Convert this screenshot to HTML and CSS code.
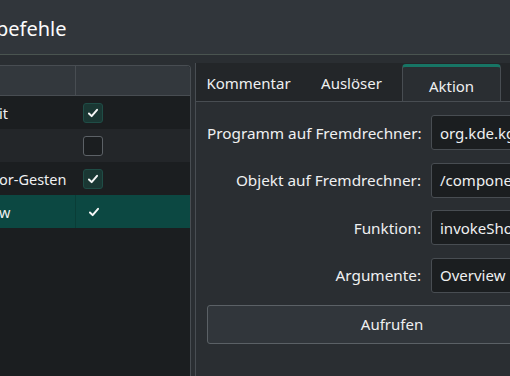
FILE: index.html
```html
<!DOCTYPE html>
<html lang="de">
<head>
    <meta charset="UTF-8">
    <meta name="viewport" content="width=device-width, initial-scale=1.0">
    <title>Befehle</title>
    <link rel="stylesheet" href="styles.css">
</head>
<body>
    <div class="titlebar">
        <h1 class="page-title">befehle</h1>
    </div>
    <div class="main">
        <div class="tree">
            <div class="tree-head">
                <div class="col-name"></div>
                <div class="col-check"></div>
            </div>
            <div class="tree-row">
                <div class="col-name">it</div>
                <div class="col-check"><span class="checkbox checked"><svg viewBox="0 0 20 20"><path d="M5.5 10.5l3 3 6-7"/></svg></span></div>
            </div>
            <div class="tree-row alt">
                <div class="col-name"></div>
                <div class="col-check"><span class="checkbox"></span></div>
            </div>
            <div class="tree-row">
                <div class="col-name">or-Gesten</div>
                <div class="col-check"><span class="checkbox checked"><svg viewBox="0 0 20 20"><path d="M5.5 10.5l3 3 6-7"/></svg></span></div>
            </div>
            <div class="tree-row selected">
                <div class="col-name">w</div>
                <div class="col-check"><span class="checkbox plain"><svg viewBox="0 0 20 20"><path d="M5.5 10.5l3 3 6-7"/></svg></span></div>
            </div>
        </div>

        <div class="tabs">
            <div class="tabbar">
                <div class="tab tab-1">Kommentar</div>
                <div class="tab tab-2">Auslöser</div>
                <div class="tab tab-3 active">Aktion</div>
            </div>
            <div class="panel">
                <div class="form">
                    <label>Programm auf Fremdrechner:</label>
                    <div class="field">org.kde.kglobalaccel</div>
                    <label>Objekt auf Fremdrechner:</label>
                    <div class="field">/component/kwin</div>
                    <label>Funktion:</label>
                    <div class="field">invokeShortcut</div>
                    <label>Argumente:</label>
                    <div class="field">Overview</div>
                </div>
                <button class="run-btn">Aufrufen</button>
            </div>
        </div>
    </div>
</body>
</html>
```

FILE: styles.css
```css
html, body {
    margin: 0;
    height: 100%;
    overflow: hidden;
}
body {
    background-color: #2a2e32;
    color: #eff0f1;
    font-family: "Noto Sans", sans-serif;
    font-size: 15px;
}
.titlebar {
    height: 55px;
    box-sizing: border-box;
    padding-top: 3px;
    background-color: #31363b;
    border-bottom: 1px solid #4a5450;
    display: flex;
    align-items: center;
}
.page-title {
    margin: 0 0 0 -4px;
    font-size: 20px;
    font-weight: normal;
    color: #fcfcfc;
}
.main {
    display: flex;
    padding-top: 10px;
    height: calc(100% - 65px);
}

/* linke Liste */
.tree {
    width: 190px;
    flex-shrink: 0;
    background-color: #1b1e20;
    border-top: 1px solid #484d52;
    border-right: 1px solid #484d52;
    border-top-right-radius: 4px;
    overflow: hidden;
}
.tree-head {
    display: flex;
    height: 29px;
    background-color: #33383d;
    border-bottom: 1px solid #484d52;
}
.tree-head .col-name {
    border-right: 1px solid #484d52;
}
.tree-row {
    display: flex;
    height: 33px;
    align-items: center;
}
.tree-row.alt {
    background-color: #232629;
}
.tree-row.selected {
    background-color: #0c4842;
}
.tree-row.selected .col-name {
    align-self: stretch;
    display: flex;
    align-items: center;
    border-right: 1px solid #0a3d37;
}
.col-name {
    width: 75px;
    flex-shrink: 0;
    white-space: nowrap;
    font-size: 14.5px;
    text-indent: -1px;
}
.col-check {
    flex: 1;
    padding-left: 8px;
    display: flex;
    align-items: center;
}
.checkbox {
    width: 18px;
    height: 18px;
    border: 1px solid #5c6166;
    border-radius: 3px;
    background-color: #1b1e20;
    display: inline-flex;
}
.checkbox.checked {
    background-color: #1a3733;
    border-color: #1f4d46;
}
.checkbox.plain {
    background: none;
    border-color: transparent;
}
.checkbox svg {
    width: 18px;
    height: 18px;
}
.checkbox path {
    fill: none;
    stroke: #f4f5f5;
    stroke-width: 2.2;
    stroke-linecap: round;
    stroke-linejoin: round;
}

/* Tabs rechts */
.tabs {
    width: 420px;
    flex-shrink: 0;
    margin: -2px 0 0 4px;
    border-left: 1px solid #484d52;
    display: flex;
    flex-direction: column;
}
.tabbar {
    display: flex;
    height: 38px;
    background-color: #232629;
}
.tab {
    display: flex;
    align-items: center;
    justify-content: center;
    padding-top: 2px;
    font-size: 15px;
    color: #eff0f1;
    box-sizing: border-box;
}
.tab-1 { width: 105px; }
.tab-2 { width: 101px; }
.tab-3 { width: 99px; }
.tab.active {
    background-color: #2a2e32;
    border: 1px solid #484d52;
    border-top: 3px solid #177565;
    border-bottom: none;
    border-radius: 4px 4px 0 0;
    margin-top: 1px;
    margin-bottom: -1px;
}
.panel {
    flex: 1;
    background-color: #2a2e32;
    border-top: 1px solid #484d52;
    padding: 13px 0 0 11px;
}
.form {
    display: grid;
    grid-template-columns: 214px 1fr;
    column-gap: 10px;
    row-gap: 12.5px;
    align-items: center;
}
.form label {
    text-align: right;
    font-size: 15.3px;
    white-space: nowrap;
}
.field {
    height: 35px;
    box-sizing: border-box;
    background-color: #1b1e20;
    border: 1px solid #484d52;
    border-radius: 3px;
    padding-left: 8px;
    display: flex;
    align-items: center;
    white-space: nowrap;
    overflow: hidden;
}
.run-btn {
    display: block;
    margin-top: 12px;
    width: 370px;
    height: 39px;
    background-color: #31363b;
    border: 1px solid #5b6166;
    border-radius: 3px;
    color: #eff0f1;
    font-family: "Noto Sans", sans-serif;
    font-size: 15px;
}
```
